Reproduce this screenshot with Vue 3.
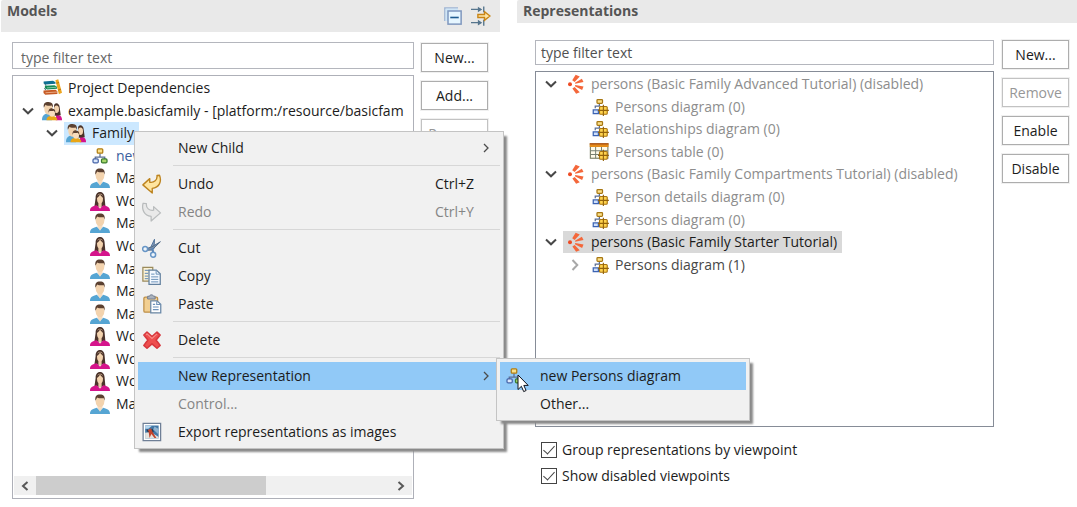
<script setup>
import { ref } from 'vue'

const modelRows = [
  { level: 0, icon: 'books', text: 'Project Dependencies' },
  { level: 0, icon: 'family', text: 'example.basicfamily - [platform:/resource/basicfam', open: true },
  { level: 1, icon: 'family', text: 'Family', open: true, selected: true },
  { level: 2, icon: 'diagram', text: 'new', tone: 'blue' },
  ...['Man', 'Woman', 'Man', 'Woman', 'Man', 'Man', 'Man', 'Woman', 'Woman', 'Woman', 'Man'].map((text) => ({
    level: 2,
    icon: text === 'Man' ? 'man' : 'woman',
    text
  }))
]

const viewRows = [
  { level: 0, icon: 'viewpoint', text: 'persons (Basic Family Advanced Tutorial) (disabled)', open: true, tone: 'dim' },
  { level: 1, icon: 'diagramDesc', text: 'Persons diagram (0)', tone: 'dim' },
  { level: 1, icon: 'diagramDesc', text: 'Relationships diagram (0)', tone: 'dim' },
  { level: 1, icon: 'tableDesc', text: 'Persons table (0)', tone: 'dim' },
  { level: 0, icon: 'viewpoint', text: 'persons (Basic Family Compartments Tutorial) (disabled)', open: true, tone: 'dim' },
  { level: 1, icon: 'diagramDesc', text: 'Person details diagram (0)', tone: 'dim' },
  { level: 1, icon: 'diagramDesc', text: 'Persons diagram (0)', tone: 'dim' },
  { level: 0, icon: 'viewpoint', text: 'persons (Basic Family Starter Tutorial)', open: true, selected: true },
  { level: 1, icon: 'diagramDesc', text: 'Persons diagram (1)', open: false, tone: 'soft' }
]

const menu = [
  { text: 'New Child', arrow: true },
  { sep: true },
  { text: 'Undo', icon: 'undo', keys: 'Ctrl+Z' },
  { text: 'Redo', icon: 'redo', keys: 'Ctrl+Y', disabled: true },
  { sep: true },
  { text: 'Cut', icon: 'cut' },
  { text: 'Copy', icon: 'copy' },
  { text: 'Paste', icon: 'paste' },
  { sep: true },
  { text: 'Delete', icon: 'delete' },
  { sep: true },
  {
    text: 'New Representation',
    arrow: true,
    active: true,
    children: [{ text: 'new Persons diagram', icon: 'diagram', active: true }, { text: 'Other...' }]
  },
  { text: 'Control...', disabled: true },
  { text: 'Export representations as images', icon: 'export' }
]

const modelButtons = [{ text: 'New...' }, { text: 'Add...' }, { text: 'Remove', disabled: true }]
const viewButtons = [{ text: 'New...' }, { text: 'Remove', disabled: true }, { text: 'Enable' }, { text: 'Disable' }]

const grouped = ref(true)
const showDisabled = ref(true)

const diagramBody =
  '<path d="M8 6V9.200M4.200 11V8.800H11.800V11" fill="none" stroke="#5c6f94" stroke-width="1"/><rect x="5.800" y="2.200" width="4.400" height="3.400" rx=".7" fill="#fbe08a" stroke="#b07c10"/><rect x="2.400" y="10.300" width="4.200" height="3.200" rx=".9" fill="#dce8fb" stroke="#4563a8"/><rect x="9.200" y="10.300" width="4.400" height="3.200" rx=".9" fill="#a8d66a" stroke="#397a2d"/>'
const gridBadge =
  '<rect x="8.400" y="7.600" width="6.200" height="6.200" rx=".8" fill="#ffd34d" stroke="#a87412" stroke-width=".9"/><path d="M11.500 6.200V15.200M7.200 10.700H15.900" stroke="#94630a" stroke-width=".9"/>'

const icons = {
  books:
    '<path d="M1.300 2.700 8.800 2.100 10.800 3.300V4.600L3 5.200 1.300 4.300Z" fill="#0f6f92"/><path d="M2.300 6.200 10 5.700 12 7V8.500L4 9.100 2.300 7.900Z" fill="#168a55"/><path d="M4 7.900 11.500 7.400" stroke="#bdebcd" stroke-width=".5"/><path d="M2.200 4.600 3.200 6.200M2 8 3 9.800" stroke="#174f5a" stroke-width=".7"/><path d="M1.200 10 10.800 9.300 12.300 10.600V12.700L2.600 13.300 1.200 12Z" fill="#c65a24"/><path d="M2.800 11.800 12 11.200" stroke="#f3c3a2" stroke-width=".6"/><path d="M10.700 1.700 13 .900 16 11.800 13.500 12.900Z" fill="#eda51e"/><path d="M11.500 4.300 13.700 3.500M12.900 9.700 15.200 8.900" stroke="#a66a08" stroke-width=".6"/>',
  family:
    '<path d="M0 15.400C0 11.500 1.600 10.700 4 10L6.500 11 8 15.400Z" fill="#56a5d3"/><path d="M11 15.400 11.300 11.200C14.700 11 16 12.300 16 15.400Z" fill="#d5148b"/><path d="M9.600 4.500C9.600.500 14.200 1.300 14.200 5.500L15 11.300 10 11.800Z" fill="#4a3228"/><ellipse cx="11.600" cy="6.600" rx="2" ry="3" fill="#f3d3ae"/><ellipse cx="5.100" cy="6.200" rx="3.300" ry="4.700" fill="#f3d3ae"/><path d="M1.500 5.400C.800 2 2.500.700 5.300.800 8 .900 9.100 2.600 8.700 5.300L7.700 3.600C5.500 4 3.500 3.800 2.800 3Z" fill="#5b4030"/><path d="M3.600 15.400C3.800 12.700 5 12.400 7.800 11.800 10.800 12.400 12.200 13 12.300 15.400Z" fill="#e9a616"/><ellipse cx="8" cy="9.500" rx="2.400" ry="3" fill="#f8ddbd"/><path d="M5.300 9.300C5 6.600 6.400 5.800 8.100 5.900 10.200 6 10.900 7.400 10.500 9.300L9.600 7.800C8 8 6.500 8 6 7.800Z" fill="#5b4030"/>',
  diagram: diagramBody,
  man:
    '<path d="M0 16C0 12.600 2 12 5.400 11L8 13.400 10.600 11C14 12 16 12.600 16 16Z" fill="#56a5d3"/><path d="M6 9.500V11L8 14.200 10 11V9.500Z" fill="#f6dcc0"/><ellipse cx="8" cy="5.800" rx="3.500" ry="4.800" fill="#f3d3ae"/><path d="M4.300 5.400C3.800 1.600 5.200.300 8 .300S12.200 1.600 11.700 5.400L11 3.400C9 3.600 6.800 3.400 5.800 2.700Z" fill="#5b4030"/>',
  woman:
    '<path d="M4.500 5.500C4.200-.8 11.800-.8 11.700 5.500L12.300 12 8 12.500 3.600 12Z" fill="#4c342b"/><path d="M0 16C0 12.700 2 12.200 5.400 11.400L8 14 10.600 11.400C14 12.200 16 12.700 16 16Z" fill="#d5148b"/><path d="M6.700 8.500V11.300L8 14.200 9.300 11.300V8.500Z" fill="#eccba8"/><ellipse cx="8" cy="6" rx="2.400" ry="3.900" fill="#f3d3ae"/><path d="M5.300 5.800C5.200 1.500 10.600 1.500 10.700 5.800 9.700 4.800 8.800 4 8 2.900 7.300 4.200 6.300 5 5.300 5.800Z" fill="#4c342b"/>',
  viewpoint:
    '<circle cx="4" cy="8.200" r="1.600" fill="#ee4b24"/><g fill="#f4673a"><path d="M5.800 4.900 8.500.600 11.800 2 7.700 6.300Z"/><path d="M8 7 13.500 3.700 14.800 6.400 8.200 7.800Z"/><path d="M8.200 8.700 14.800 9.900 13.700 12.700 7.900 9.800Z"/><path d="M7.700 10.300 11.800 14.500 8.900 15.800 5.900 11.600Z"/></g>',
  diagramDesc:
    '<path d="M8.300 4.500V7M5 9V7.200H9" fill="none" stroke="#5c6f94"/><rect x="6.400" y="2" width="4.400" height="3" rx=".6" fill="#fbe08a" stroke="#a87712"/><path d="M3.400 13.200V10.300H7.500V13.200Z" fill="#cfe0fa" stroke="#3c63b3"/>' + gridBadge,
  tableDesc:
    '<rect x="1.100" y="1.500" width="14" height="11.500" fill="#fffbe9" stroke="#7c8065" stroke-width=".9"/><path d="M1 7H15M1 10H15M5.300 4V13M10 4V13" stroke="#777f70" stroke-width=".8"/><path d="M.600 1.200H15.600V4H.600Z" fill="#e48c19"/><path d="M.600 1.500H15.600" stroke="#a84c16"/>' + gridBadge,
  undo:
    '<path d="M.700 8.700 6.200 3.700V6.600C9.700 7.100 12.400 4.900 12 1.200L14 1C16 6 13.800 10.800 8.200 11.500V15.200Z" fill="#ffe5a0" stroke="#bd8420" stroke-width="1.100" stroke-linejoin="round"/>',
  redo:
    '<path d="M14.800 8.700 9.300 3.700V6.600C5.800 7.100 3.100 4.900 3.500 1.200L.900 1C-.5 6 1.700 10.800 7.300 11.500V15.200Z" fill="#e9e9e9" stroke="#b9bcbd" stroke-width="1" stroke-linejoin="round"/>',
  cut:
    '<path d="M10 1 9.600 8.500 6.600 8.200Z" fill="#8299b7" stroke="#54769e" stroke-width=".8"/><path d="M14.700 3 8 9.600 4.200 9.800 4 8.400 8 7Z" fill="#7890ad" stroke="#526b88" stroke-width=".8"/><path d="M8.300 8 8.900 11.500" stroke="#5a84b5" stroke-width="1.700"/><circle cx="2.500" cy="8.700" r="2" fill="#eef5fb" stroke="#6795c6" stroke-width="1.200"/><circle cx="8.900" cy="13.400" r="2" fill="#eef5fb" stroke="#6795c6" stroke-width="1.200"/>',
  copy:
    '<path d="M.700 1H8.600V12H.700Z" fill="#fcf3d6" stroke="#9b8b5c"/><path d="M2.200 3.500H6M2.200 5.800H5M2.200 8H5M2.200 10H5" stroke="#7b9aba"/><path d="M5.600 3.300H11.500L14.600 6.200V14.700H5.600Z" fill="#f4f9ff" stroke="#63819f"/><path d="M11.300 3.500V6.500H14.300M7.300 6.500H10M7.300 8.700H13M7.300 10.700H13M7.300 12.700H13" fill="none" stroke="#6a91b8" stroke-width=".8"/>',
  paste:
    '<rect x="1.500" y="2.500" width="11" height="12" rx="1" fill="#f2cf91" stroke="#bd8f48"/><path d="M4.500 4V1.800H6L6.700.700H8.400L9.200 1.800H10.500V4Z" fill="#aab2bd" stroke="#747f92" stroke-width=".8"/><path d="M7 5.500H12L15 8.200V15H7Z" fill="#fff" stroke="#6988a8"/><path d="M11.800 5.800V8.400H14.700M8.700 8.300H10.500M8.700 10.400H13.300M8.700 12.500H13.300" fill="none" stroke="#6b91b9" stroke-width=".9"/>',
  delete:
    '<path d="M1.500 4 4 1.700 8 5.200 12 1.700 14.500 4 11.300 8 14.500 12.300 12 14.600 8 11.100 4 14.600 1.500 12.300 4.700 8Z" fill="#ee4f4f" stroke="#d8383e" stroke-width="1.300" stroke-linejoin="round"/><path d="M3.200 3.900 4 3.100 8 6.700 12 3.100" fill="none" stroke="#f88b86" stroke-width=".9"/>',
  export:
    '<rect x=".900" y="1.100" width="14" height="13.800" fill="#fff" stroke="#6f7f96"/><rect x="2.500" y="2.800" width="10.800" height="10.300" fill="#4177a6"/><path d="M2.500 3H8L5 5.300H2.500Z" fill="#b7d7ef"/><path d="M10 3.500 13.300 5.500V10L9 6Z" fill="#90b4d1"/><path d="M2.500 8.500 7 8 13.300 12V13H2.500Z" fill="#e4e2dd"/><path d="M4.500 6.500 7.200 5 9.500 9.500 11.500 12.800H10L7.500 9.500 6 12.800 5.500 9Z" fill="#c1442d"/><path d="M8 5.500 9 8M4 6 5 8" stroke="#29394d"/>'
}
</script>

<template>
  <main class="page">
    <section class="pane models">
      <header class="bar tall">
        <h2>Models</h2>
        <div class="tools">
          <button class="tool" aria-label="Collapse all">
            <svg viewBox="0 0 16 16">
              <path d="M1.500 12V1.500H12" fill="none" stroke="#9fb4d2" stroke-width="1.200" />
              <rect x="2" y="2" width="10" height="10" fill="#cfe6f7" />
              <rect x="4" y="4" width="10.500" height="10.500" fill="#e6f6ff" stroke="#7f97be" stroke-width="1.200" />
              <path d="M5.800 9.200H12.600" stroke="#1f5c91" stroke-width="1.300" />
            </svg>
          </button>
          <button class="tool" aria-label="Link with editor">
            <svg viewBox="0 0 16 16">
              <path d="M0 2.700H8M0 13.300H8M10.200.300V5M10.200 11V15.700" fill="none" stroke="#56758d" stroke-width="1.100" />
              <path d="M5.500.500 9 2.700 5.500 5ZM5.500 11 9 13.300 5.500 15.500Z" fill="#56758d" />
              <path d="M5.500 6.800H10.800V4.600L15.200 8 10.800 11.400V9.200H5.500Z" fill="#ffe6a6" stroke="#c98516" stroke-width="1.100" />
            </svg>
          </button>
        </div>
      </header>
      <div class="body">
        <div class="main">
          <input class="filter" type="text" placeholder="type filter text" aria-label="Filter models" />
          <div class="tree">
            <ul class="rows fifteen">
              <li v-for="(r, i) in modelRows" :key="i" class="row" :class="'lv' + r.level">
                <span class="twist">
                  <svg v-if="r.open" viewBox="0 0 12 8"><path d="M1 1.500 6 6.300 11 1.500" /></svg>
                </span>
                <span class="label" :class="[r.tone, { selected: r.selected }]">
                  <svg class="icon" viewBox="0 0 16 16" v-html="icons[r.icon]"></svg>
                  <span>{{ r.text }}</span>
                </span>
              </li>
            </ul>
            <div class="scroll">
              <button aria-label="Scroll left"><svg viewBox="0 0 8 10"><path d="M6.500 1 2 5 6.500 9" /></svg></button>
              <div class="track"><div class="thumb"></div></div>
              <button aria-label="Scroll right"><svg viewBox="0 0 8 10"><path d="M1.500 1 6 5 1.500 9" /></svg></button>
            </div>
          </div>
        </div>
        <div class="side">
          <button v-for="b in modelButtons" :key="b.text" class="btn" :disabled="b.disabled">{{ b.text }}</button>
        </div>
      </div>
    </section>

    <section class="pane views">
      <header class="bar"><h2>Representations</h2></header>
      <div class="body">
        <div class="main">
          <input class="filter" type="text" placeholder="type filter text" aria-label="Filter representations" />
          <div class="tree">
            <ul class="rows nine">
              <li v-for="(r, i) in viewRows" :key="i" class="row" :class="'lv' + r.level">
                <span class="twist">
                  <svg v-if="r.open" viewBox="0 0 12 8"><path d="M1 1.500 6 6.300 11 1.500" /></svg>
                  <svg v-else-if="r.open === false" class="closed" viewBox="0 0 8 12"><path d="M1.500 1 6.300 6 1.500 11" /></svg>
                </span>
                <span class="label" :class="[r.tone, { grey: r.selected }]">
                  <svg class="icon" viewBox="0 0 16 16" v-html="icons[r.icon]"></svg>
                  <span>{{ r.text }}</span>
                </span>
              </li>
            </ul>
          </div>
          <div class="checks">
            <label><input v-model="grouped" type="checkbox" />Group representations by viewpoint</label>
            <label><input v-model="showDisabled" type="checkbox" />Show disabled viewpoints</label>
          </div>
        </div>
        <div class="side">
          <button v-for="b in viewButtons" :key="b.text" class="btn" :disabled="b.disabled">{{ b.text }}</button>
        </div>
      </div>
    </section>

    <ul class="menu context">
      <li v-for="(m, i) in menu" :key="i" :class="{ sep: m.sep }">
        <button v-if="!m.sep" class="item" :class="{ active: m.active }" :disabled="m.disabled">
          <span class="slot"><svg v-if="m.icon" class="icon" viewBox="0 0 16 16" v-html="icons[m.icon]"></svg></span>
          <span class="name">{{ m.text }}</span>
          <span v-if="m.keys" class="keys">{{ m.keys }}</span>
          <svg v-if="m.arrow" class="arrow" viewBox="0 0 6 10"><path d="M1 1 5 5 1 9" /></svg>
        </button>
        <ul v-if="m.children" class="menu sub">
          <li v-for="c in m.children" :key="c.text">
            <button class="item" :class="{ active: c.active }">
              <span class="slot"><svg v-if="c.icon" class="icon" viewBox="0 0 16 16" v-html="icons[c.icon]"></svg></span>
              <span class="name">{{ c.text }}</span>
            </button>
          </li>
          <svg class="cursor" viewBox="0 0 12 19">
            <path d="M1 1V15.500L4.400 12.300 6.700 17.600 9.100 16.500 6.800 11.400H11.200Z" fill="#fff" stroke="#10131c" />
          </svg>
        </ul>
      </li>
    </ul>
  </main>
</template>

<style>
html,
body {
  background: #fff;
}
</style>

<style scoped>
* {
  box-sizing: border-box;
}
.page {
  position: relative;
  display: flex;
  gap: 17px;
  min-height: 100vh;
  padding-left: 1px;
  overflow: hidden;
  font: 14px/18px "Open Sans", "Noto Sans", sans-serif;
  color: #1c1c1c;
}
button,
input {
  font: inherit;
  color: inherit;
}
ul {
  list-style: none;
  margin: 0;
  padding: 0;
}
.pane {
  display: flex;
  flex-direction: column;
  min-width: 0;
}
.models {
  flex: 499 1 0;
}
.views {
  flex: 560 1 0;
}
.bar {
  display: flex;
  justify-content: space-between;
  height: 23px;
  padding: 2px 9px 0 6px;
  background: #e9e9e9;
  border-radius: 2px 0 0 0;
}
.bar.tall {
  height: 32px;
}
h2 {
  margin: 0;
  font-size: 14px;
  line-height: 18px;
  font-weight: 700;
  color: #555;
}
.tools {
  display: flex;
  align-items: center;
  gap: 8px;
  padding-bottom: 2px;
}
.tool {
  display: flex;
  padding: 0;
  border: 0;
  background: none;
}
.tool svg {
  width: 20px;
  height: 20px;
}
.body {
  flex: 1;
  display: flex;
  gap: 7px;
}
.models .body {
  padding: 10px 12px 8px 11px;
}
.views .body {
  gap: 8px;
  padding: 17px 8px 22px 18px;
}
.main {
  flex: 1;
  min-width: 0;
  display: flex;
  flex-direction: column;
  gap: 6px;
}
.filter {
  width: 100%;
  height: 27px;
  padding: 3px 8px 0;
  border: 1px solid #b4b6bd;
  border-radius: 0;
  background: #fff;
}
.filter::placeholder {
  color: #666;
  opacity: 1;
}
.views .filter {
  height: 25px;
  padding: 0 5px 1px;
}
.views .filter::placeholder {
  color: #505050;
}
.tree {
  flex: 1;
  display: flex;
  flex-direction: column;
  justify-content: space-between;
  min-width: 0;
  padding: 1px;
  border: 1px solid #aeb0b8;
}
.views .tree {
  border-color: #868c97;
}
.rows {
  display: grid;
  overflow: hidden;
}
.fifteen {
  height: 338px;
  grid-template-rows: repeat(15, 1fr);
}
.nine {
  height: 203px;
  grid-template-rows: repeat(9, 1fr);
}
.row {
  display: flex;
  min-width: 0;
  padding-left: 2px;
  white-space: nowrap;
}
.lv1 {
  padding-left: 26px;
}
.lv2 {
  padding-left: 50px;
}
.twist {
  flex: none;
  width: 24px;
  display: flex;
  align-items: center;
  justify-content: center;
}
.twist svg {
  width: 12px;
  height: 8px;
  fill: none;
  stroke: #484848;
  stroke-width: 2;
}
.twist svg.closed {
  width: 8px;
  height: 12px;
  stroke: #a8a8a8;
}
.label {
  display: flex;
  align-items: center;
  gap: 6px;
  padding: 0 5px 0 2px;
}
.icon {
  flex: none;
  width: 20px;
  height: 20px;
}
.selected {
  background: #cce8ff;
}
.grey {
  background: #d9d9d9;
}
.dim {
  color: #8d8d8d;
}
.soft {
  color: #484848;
}
.blue {
  color: #3b5f9e;
}
.scroll {
  display: flex;
  height: 19px;
  margin-bottom: 2px;
  background: #f0f0f0;
}
.scroll button {
  flex: none;
  width: 22px;
  display: flex;
  align-items: center;
  justify-content: center;
  padding: 0;
  border: 0;
  background: none;
}
.scroll svg {
  width: 8px;
  height: 10px;
  fill: none;
  stroke: #585858;
  stroke-width: 2;
}
.track {
  flex: 1;
}
.thumb {
  width: 65%;
  height: 100%;
  background: #cdcdcd;
}
.side {
  flex: none;
  display: flex;
  flex-direction: column;
  gap: 9px;
  width: 67px;
  padding-top: 1px;
}
.views .side {
  padding-top: 0;
}
.btn {
  height: 29px;
  padding: 0;
  border: 1px solid #adadad;
  background: #fff;
  box-shadow: 0 0 0 1px #f0f0f0;
}
.btn:disabled {
  color: #979797;
  border-color: #c2c2c2;
}
.checks {
  display: flex;
  flex-direction: column;
  gap: 8px;
  padding: 8px 0 0 6px;
}
.checks label {
  display: flex;
  align-items: center;
  gap: 5px;
}
.checks input {
  position: relative;
  appearance: none;
  width: 16px;
  height: 16px;
  margin: 0;
  border: 1px solid #444;
  background: #fff;
}
.checks input:checked::after {
  content: "";
  position: absolute;
  left: 4px;
  top: 0;
  width: 5px;
  height: 10px;
  border: solid #444;
  border-width: 0 1px 1px 0;
  rotate: 42deg;
}
.menu {
  position: absolute;
  background: #f1f1f1;
  border: 1px solid #c4c4c4;
  box-shadow: 4px 4px 2px -1px #8a8a8a;
}
.context {
  left: 134px;
  top: 131px;
  width: 370px;
  padding: 2px 3px;
}
.context > li {
  position: relative;
}
.sub {
  left: calc(100% - 4px);
  top: -4px;
  width: 254px;
  padding: 3px 3px 2px;
}
.item {
  width: 100%;
  height: 28px;
  display: flex;
  align-items: center;
  padding: 0 11px 0 4px;
  border: 0;
  background: none;
  text-align: left;
}
.item:disabled {
  color: #858585;
}
.item.active {
  background: #91c9f7;
}
.slot {
  flex: none;
  width: 36px;
  display: flex;
}
.name {
  flex: 1;
}
.keys {
  width: 54px;
}
.arrow {
  width: 6px;
  height: 10px;
  fill: none;
  stroke: #4c4c4c;
  stroke-width: 1.3;
}
.sep {
  height: 8px;
  padding: 3px 0 0 35px;
}
.sep::before {
  content: "";
  display: block;
  height: 1px;
  background: #d7d7d7;
}
.cursor {
  position: absolute;
  left: 20px;
  top: 15px;
  width: 12px;
  height: 19px;
}
</style>
